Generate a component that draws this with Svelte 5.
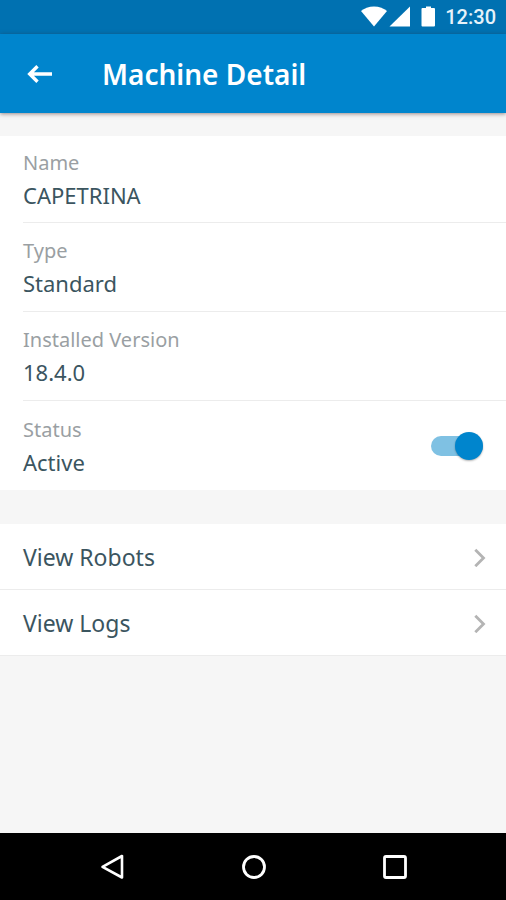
<script>
  const details = [
    { label: 'Name', value: 'CAPETRINA' },
    { label: 'Type', value: 'Standard' },
    { label: 'Installed Version', value: '18.4.0' }
  ];
  const links = ['View Robots', 'View Logs'];
  let active = $state(true);
</script>

<div class="screen">
  <div class="status-bar">
    <svg class="signals" width="76" height="22" viewBox="0 0 76 22" fill="#fff" aria-hidden="true">
      <path d="M0 5C3 2.500 8 .500 13 .500S23 2.500 26 5L13 20.500Z" />
      <path d="M28.500 20.500 49 .500V20.500Z" />
      <path d="M65 .500V2h-3.500q-1 0-1 1v16.500q0 1 1 1h11.500q1 0 1-1V3q0-1-1-1H70V.500Z" />
    </svg>
    <span class="time">12:30</span>
  </div>

  <header>
    <button class="back" aria-label="Back">
      <svg width="26" height="20" viewBox="0 0 26 20" fill="none" stroke="#fff" stroke-width="3.400" aria-hidden="true">
        <path d="M25 10H3M10.500 2.200 2.700 10l7.800 7.800" />
      </svg>
    </button>
    <h1>Machine Detail</h1>
  </header>

  <main>
    <section class="details">
      {#each details as item}
        <div class="row">
          <div class="field">
            <span class="label">{item.label}</span>
            <span class="value">{item.value}</span>
          </div>
        </div>
      {/each}
      <div class="row">
        <label class="field" for="active">
          <span class="label">Status</span>
          <span class="value">{active ? 'Active' : 'Inactive'}</span>
        </label>
        <input id="active" class="switch" type="checkbox" role="switch" bind:checked={active} />
      </div>
    </section>

    <nav class="links">
      {#each links as link}
        <a href="#{link.toLowerCase().replace(' ', '-')}">
          {link}
          <svg width="12" height="20" viewBox="0 0 12 20" fill="none" stroke="#b4b4b4" stroke-width="2.800" aria-hidden="true">
            <path d="M1.300 2.800 9.500 11l-8.200 8.200" />
          </svg>
        </a>
      {/each}
    </nav>
  </main>

  <footer>
    <button aria-label="Back">
      <svg width="26" height="28" viewBox="0 0 26 28" fill="none" stroke="#fff" stroke-width="2.600" stroke-linejoin="round" aria-hidden="true">
        <path d="M22 3v21.500L2.500 13.800Z" />
      </svg>
    </button>
    <button aria-label="Home">
      <svg width="26" height="28" viewBox="0 0 26 28" fill="none" stroke="#fff" stroke-width="2.800" aria-hidden="true">
        <circle cx="13" cy="14" r="10.500" />
      </svg>
    </button>
    <button aria-label="Recent apps">
      <svg width="26" height="28" viewBox="0 0 26 28" fill="none" stroke="#fff" stroke-width="2.800" aria-hidden="true">
        <rect x="2.500" y="3.500" width="21" height="21" rx="1.500" />
      </svg>
    </button>
  </footer>
</div>

<style>
  :global(body) {
    margin: 0;
  }

  .screen {
    display: flex;
    flex-direction: column;
    min-height: 100vh;
    background: #f6f6f6;
    color: #3b555f;
    font-family: 'Noto Sans', sans-serif;
  }

  .status-bar {
    display: flex;
    align-items: center;
    justify-content: flex-end;
    gap: 8px;
    height: 34px;
    padding-right: 10px;
    background: #0071b1;
    color: #e6f2fa;
  }

  .time {
    font: 500 20px/34px Roboto, sans-serif;
  }

  header {
    display: flex;
    align-items: center;
    gap: 49px;
    height: 79px;
    padding: 0 27px;
    background: #0085cd;
    box-shadow: 0 1px 4px rgba(60, 30, 30, 0.5);
  }

  button {
    display: flex;
    padding: 0;
    border: 0;
    background: none;
    cursor: pointer;
  }

  h1 {
    margin: 0;
    color: #fff;
    font-size: 28px;
    font-weight: 600;
    line-height: 36px;
  }

  main {
    display: flex;
    flex: 1;
    flex-direction: column;
    gap: 34px;
    padding-top: 23px;
  }

  section,
  .links {
    background: #fff;
  }

  .row {
    display: flex;
    align-items: center;
    justify-content: space-between;
    box-sizing: border-box;
    height: 89px;
    margin-left: 23px;
    padding-right: 23px;
    border-bottom: 1px solid #ececec;
  }

  .row:first-child {
    height: 87px;
  }

  .row:last-child {
    border-bottom: 0;
  }

  .field {
    display: flex;
    flex-direction: column;
  }

  .label {
    color: #9a9fa3;
    font-size: 20px;
    line-height: 32px;
  }

  .value {
    font-size: 22px;
    line-height: 32px;
  }

  .switch {
    position: relative;
    width: 52px;
    height: 28px;
    margin: 0;
    appearance: none;
    cursor: pointer;
  }

  .switch::before {
    position: absolute;
    inset: 4px 0;
    border-radius: 10px;
    background: #c4c4c4;
    content: '';
  }

  .switch::after {
    position: absolute;
    top: 0;
    left: 0;
    width: 28px;
    height: 28px;
    border-radius: 50%;
    background: #f5f5f5;
    box-shadow: 0 1px 2px rgba(0, 0, 0, 0.3);
    content: '';
  }

  .switch:checked::before {
    background: #7fc1e3;
  }

  .switch:checked::after {
    right: 0;
    left: auto;
    background: #0085cd;
  }

  .links a {
    display: flex;
    align-items: center;
    justify-content: space-between;
    box-sizing: border-box;
    height: 66px;
    padding: 0 20px 0 23px;
    border-bottom: 1px solid #ececec;
    color: inherit;
    font-size: 23px;
    line-height: 32px;
    text-decoration: none;
  }

  footer {
    display: flex;
    height: 67px;
    padding: 0 40px 0 42px;
    background: #000;
  }

  footer button {
    flex: 1;
    align-items: center;
    justify-content: center;
  }
</style>
